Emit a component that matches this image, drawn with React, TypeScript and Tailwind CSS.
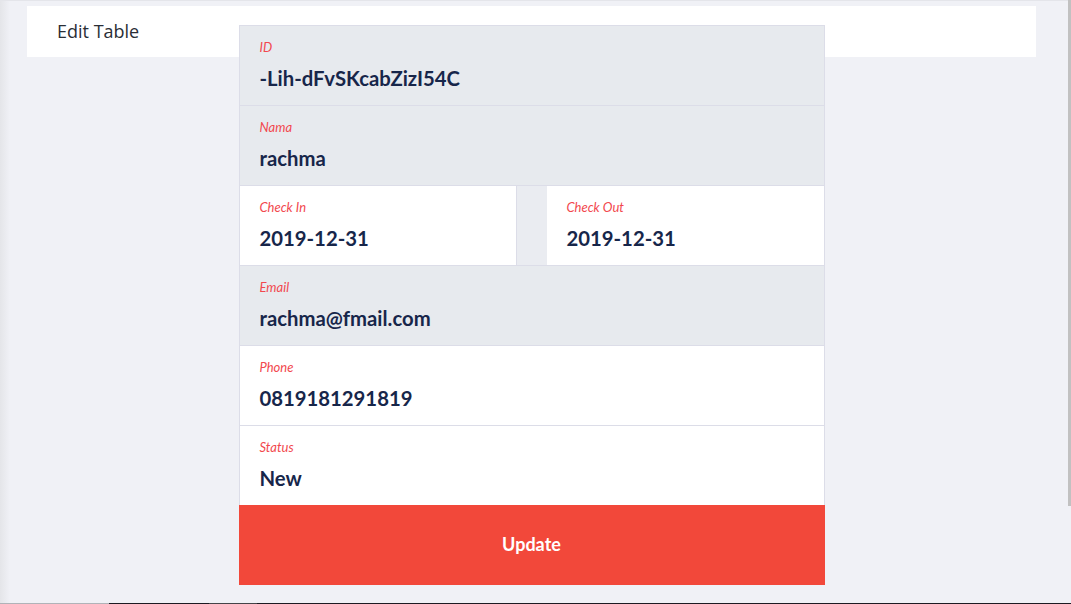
import React from "react";

const lato = { fontFamily: "Lato, 'Noto Sans', sans-serif" };

function Field({ label, value, gray }: { label: string; value: string; gray?: boolean }) {
  return (
    <div
      className={`h-[80px] border-b border-[#dcdde8] pl-[20px] pt-[13px] ${gray ? "bg-[#e7eaee]" : "bg-white"}`}
    >
      <div className="text-[13px] leading-[16px] italic text-[#f2484e]">{label}</div>
      <div className="mt-[11px] text-[20.3px] leading-[24px] font-bold text-[#17264a]">{value}</div>
    </div>
  );
}

export default function App() {
  return (
    <div className="relative w-[1071px] h-[604px] overflow-hidden bg-[#f0f1f6]">
      <div className="absolute left-0 top-0 h-full w-[10px] bg-gradient-to-r from-[#e4e5e9] to-[#f0f1f6]" />
      <div className="absolute left-0 top-0 h-[1px] w-full bg-[#e4e5ea]" />
      <div className="relative ml-[27px] w-[1009px] pt-[6px]">
        <div
          className="h-[51px] bg-white pl-[30px] pb-[1px] flex items-center text-[18px] text-[#2a2e36]"
          style={{ fontFamily: "'Open Sans', 'Noto Sans', sans-serif" }}
        >
          Edit Table
        </div>
        <div className="relative mt-[-32px] mx-auto w-[586px]" style={lato}>
          <div className="border-t border-l border-r border-[#dcdde8]">
            <Field label="ID" value="-Lih-dFvSKcabZizI54C" gray />
            <Field label="Nama" value="rachma" gray />
            <div className="flex h-[80px] bg-[#eaecf1] border-b border-[#dcdde8] -mx-[1px]">
              <div className="w-[278px] bg-white border-l border-r border-[#dcdde8] pl-[20px] pt-[13px]">
                <div className="text-[13px] leading-[16px] italic text-[#f2484e]">Check In</div>
                <div className="mt-[11px] text-[20.3px] leading-[24px] font-bold text-[#17264a]">2019-12-31</div>
              </div>
              <div className="w-[30px]" />
              <div className="w-[278px] bg-white border-r border-[#dcdde8] pl-[20px] pt-[13px]">
                <div className="text-[13px] leading-[16px] italic text-[#f2484e]">Check Out</div>
                <div className="mt-[11px] text-[20.3px] leading-[24px] font-bold text-[#17264a]">2019-12-31</div>
              </div>
            </div>
            <Field label="Email" value="rachma@fmail.com" gray />
            <Field label="Phone" value="0819181291819" />
            <div className="h-[79px] bg-white pl-[20px] pt-[13px]">
              <div className="text-[13px] leading-[16px] italic text-[#f2484e]">Status</div>
              <div className="mt-[11px] text-[20.3px] leading-[24px] font-bold text-[#17264a]">New</div>
            </div>
          </div>
          <button className="w-[586px] h-[80px] bg-[#f2483a] text-white text-[18px] font-bold flex items-center justify-center pb-[2px]">
            Update
          </button>
        </div>
      </div>
      <div className="absolute right-0 top-0 w-[3px] h-[506px] bg-[#c1c1c1]" />
      <div className="absolute left-0 bottom-0 h-[1px] w-full flex">
        <div className="w-[109px] bg-[#b0b3b8]" />
        <div className="w-[100px] bg-[#1c1a22]" />
        <div className="w-[48px] bg-[#444448]" />
        <div className="flex-1 bg-[#1c1a22]" />
      </div>
    </div>
  );
}
